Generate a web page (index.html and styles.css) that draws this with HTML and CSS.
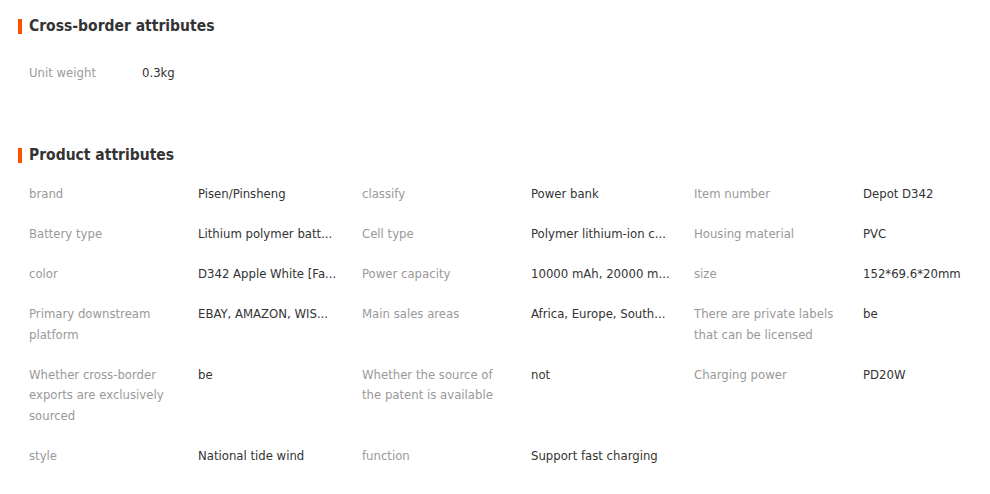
FILE: index.html
```html
<!DOCTYPE html>
<html>
<head>
<meta charset="utf-8">
<link rel="stylesheet" href="styles.css">
</head>
<body>
<div class="page">
  <section class="section section-cross">
    <h2 class="title">Cross-border attributes</h2>
    <div class="attrs attrs-single">
      <div class="attr"><div class="label label-short">Unit weight</div><div class="value">0.3kg</div></div>
    </div>
  </section>
  <section class="section section-product">
    <h2 class="title">Product attributes</h2>
    <div class="attrs">
      <div class="attr"><div class="label">brand</div><div class="value">Pisen/Pinsheng</div></div>
      <div class="attr"><div class="label">classify</div><div class="value">Power bank</div></div>
      <div class="attr"><div class="label">Item number</div><div class="value">Depot D342</div></div>
      <div class="attr"><div class="label">Battery type</div><div class="value">Lithium polymer batt...</div></div>
      <div class="attr"><div class="label">Cell type</div><div class="value">Polymer lithium-ion c...</div></div>
      <div class="attr"><div class="label">Housing material</div><div class="value">PVC</div></div>
      <div class="attr"><div class="label">color</div><div class="value">D342 Apple White [Fa...</div></div>
      <div class="attr"><div class="label">Power capacity</div><div class="value">10000 mAh, 20000 m...</div></div>
      <div class="attr"><div class="label">size</div><div class="value">152*69.6*20mm</div></div>
      <div class="attr"><div class="label">Primary downstream platform</div><div class="value">EBAY, AMAZON, WIS...</div></div>
      <div class="attr"><div class="label">Main sales areas</div><div class="value">Africa, Europe, South...</div></div>
      <div class="attr"><div class="label">There are private labels that can be licensed</div><div class="value">be</div></div>
      <div class="attr"><div class="label">Whether cross-border exports are exclusively sourced</div><div class="value">be</div></div>
      <div class="attr"><div class="label">Whether the source of the patent is available</div><div class="value">not</div></div>
      <div class="attr"><div class="label">Charging power</div><div class="value">PD20W</div></div>
      <div class="attr"><div class="label">style</div><div class="value">National tide wind</div></div>
      <div class="attr"><div class="label">function</div><div class="value">Support fast charging</div></div>
    </div>
  </section>
</div>
</body>
</html>
```
FILE: styles.css
```css
html, body {
  margin: 0;
  padding: 0;
  background: #fff;
  overflow-x: hidden;
}
.page {
  padding: 16px 0 0 18px;
  font-family: "DejaVu Sans Condensed", "DejaVu Sans", sans-serif;
  font-stretch: condensed;
  font-size: 13px;
  line-height: 20px;
  color: #333;
}
.title {
  margin: 0;
  display: flex;
  align-items: center;
  gap: 7px;
  font-size: 15.5px;
  line-height: 20px;
  font-weight: bold;
  color: #333;
}
.title::before {
  content: "";
  display: block;
  width: 4px;
  height: 15px;
  background: #ff5000;
}
.section-cross .attrs {
  margin-top: 27px;
}
.section-product {
  margin-top: 62px;
}
.section-product .attrs {
  margin-top: 19px;
  line-height: 20.5px;
}
.attrs {
  padding-left: 11px;
  display: grid;
  grid-template-columns: 333px 332px 1fr;
  row-gap: 19.5px;
}
.attrs-single {
  grid-template-columns: 1fr;
}
.attr {
  display: flex;
  align-items: flex-start;
}
.label {
  width: 145px;
  margin-right: 24px;
  color: #999;
  flex: none;
}
.label-short {
  width: 100px;
  margin-right: 13px;
}
.value {
  white-space: nowrap;
  color: #333;
}
```
